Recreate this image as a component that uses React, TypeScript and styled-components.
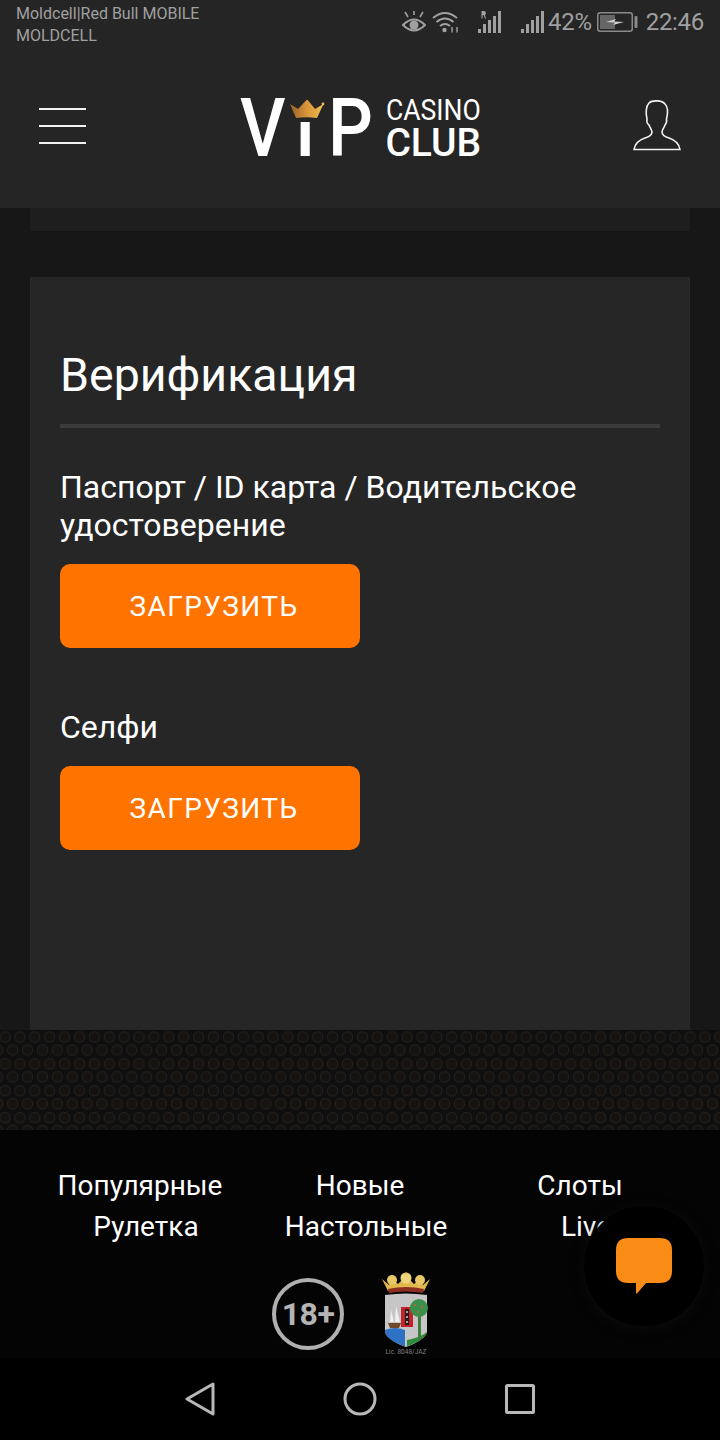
import React, { FC } from "react";
import styled, { createGlobalStyle } from "styled-components";

const GlobalStyle = createGlobalStyle`
  html, body {
    margin: 0;
    padding: 0;
    background: #000;
  }
  * {
    box-sizing: border-box;
  }
`;

const Screen = styled.div`
  position: relative;
  display: flex;
  flex-direction: column;
  width: 720px;
  height: 1440px;
  overflow: hidden;
  background: #171717;
  font-family: Roboto, "Noto Sans", sans-serif;
  color: #fff;
`;

const Header = styled.header`
  display: flex;
  flex-direction: column;
  flex: 0 0 208px;
  background: #252525;
`;

const StatusBar = styled.div`
  display: flex;
  justify-content: space-between;
  height: 46px;
  padding: 3px 16px 0;
  color: #a0a0a0;
`;

const Carrier = styled.div`
  font-size: 16px;
  line-height: 22px;
`;

const StatusRight = styled.div`
  display: flex;
  align-items: center;
  height: 44px;
  margin-top: -3px;
`;

const StatusIcon = styled.svg<{ $gap?: number }>`
  display: block;
  margin-right: ${(p) => p.$gap ?? 0}px;
`;

const StatusText = styled.span<{ $gap?: number }>`
  font-size: 24px;
  line-height: 44px;
  margin-right: ${(p) => p.$gap ?? 0}px;
  letter-spacing: -0.3px;
`;

const AppBar = styled.div`
  display: flex;
  align-items: flex-start;
  justify-content: space-between;
  padding: 53px 39px 0;
`;

const Burger = styled.div`
  display: flex;
  flex-direction: column;
  gap: 15px;
  width: 47px;
  margin-top: 9px;
`;

const BurgerLine = styled.span`
  display: block;
  height: 2px;
  background: #f2f2f2;
`;

const Logo = styled.div`
  display: flex;
  flex: none;
  align-items: flex-start;
  height: 58px;
  width: 241px;
  margin-left: 1px;
`;

const LogoBig = styled.span<{ $width: number }>`
  display: block;
  flex: none;
  width: ${(p) => p.$width}px;
  font-size: 81px;
  line-height: 60px;
  font-weight: 500;
  transform: scaleX(0.87);
  transform-origin: left center;
`;

const LogoCrowned = styled.span`
  position: relative;
  display: block;
  flex: none;
  width: 39px;
  height: 58px;
`;

const LogoI = styled.span`
  position: absolute;
  left: 8px;
  bottom: -10px;
  font-size: 64px;
  line-height: 1;
  font-weight: 700;
`;

const Crown = styled.svg`
  position: absolute;
  left: 0;
  top: 0;
`;

const LogoWords = styled.div`
  display: flex;
  flex: none;
  flex-direction: column;
  margin-left: -2px;
`;

const LogoCasino = styled.span`
  font-size: 29.5px;
  line-height: 22px;
  height: 30px;
  white-space: nowrap;
  transform: scaleX(0.9);
  transform-origin: left center;
`;

const LogoClub = styled.span`
  font-size: 39px;
  line-height: 28px;
  font-weight: 500;
  letter-spacing: -0.1px;
  white-space: nowrap;
`;

const Main = styled.main`
  display: flex;
  flex-direction: column;
  flex: 1 1 auto;
  padding: 0 30px;
  background: #171717;
`;

const CardTail = styled.div`
  flex: 0 0 23px;
  background: #1e1e1e;
`;

const Card = styled.section`
  flex: 1 1 auto;
  margin-top: 46px;
  padding: 70px 30px 0;
  background: #262626;
`;

const Title = styled.h1`
  margin: 0;
  padding-bottom: 21px;
  border-bottom: 4px solid #3b3b3b;
  font-size: 46.5px;
  line-height: 56px;
  font-weight: 400;
`;

const DocBlock = styled.div<{ $top: number }>`
  margin-top: ${(p) => p.$top}px;
`;

const DocLabel = styled.div`
  font-size: 32px;
  line-height: 38px;
`;

const UploadButton = styled.button`
  display: block;
  width: 300px;
  height: 84px;
  margin-top: 20px;
  padding: 0 0 0 8px;
  border: 0;
  border-radius: 10px;
  background: #ff7300;
  color: #fff;
  font-family: inherit;
  font-size: 28px;
  letter-spacing: 1.4px;
`;

const Perforated = styled.div`
  flex: 0 0 100px;
  background-color: #0f0f0f;
  background-image:
    radial-gradient(circle at 50% 50%, #15120f 0, #15120f 4.4px, #242322 5.1px, #1c1c1c 5.5px, transparent 6px),
    radial-gradient(circle at 50% 50%, #15120f 0, #15120f 4.4px, #242322 5.1px, #1c1c1c 5.5px, transparent 6px);
  background-size: 14.9px 26.9px;
  background-position: -2.45px -6.45px, 5.25px 6.55px;
`;

const Footer = styled.footer`
  display: flex;
  flex-direction: column;
  flex: 0 0 228px;
  padding: 35px 30px 0;
  background: #040404;
`;

const LinkRow = styled.nav<{ $shift?: number }>`
  display: grid;
  grid-template-columns: repeat(3, 220px);
  height: 41px;
  padding-left: ${(p) => p.$shift ?? 0}px;
`;

const FooterLink = styled.a`
  font-size: 28px;
  line-height: 41px;
  text-align: center;
  color: #fff;
  white-space: nowrap;
`;

const Badges = styled.div`
  display: flex;
  justify-content: center;
  align-items: flex-start;
  gap: 37px;
  margin-top: 25px;
  padding-right: 17px;
`;

const AgeBadge = styled.div`
  display: flex;
  align-items: center;
  justify-content: center;
  width: 72px;
  height: 72px;
  margin-top: 6px;
  border: 4px solid #b0b0b0;
  border-radius: 50%;
  color: #b4b4b4;
  font-size: 32px;
  font-weight: 700;
  letter-spacing: -0.5px;
`;

const Licence = styled.div`
  display: flex;
  flex-direction: column;
  align-items: center;
  width: 50px;
`;

const LicenceText = styled.span`
  font-size: 6.5px;
  line-height: 10px;
  color: #808080;
  white-space: nowrap;
`;

const ChatButton = styled.div`
  position: absolute;
  left: 584px;
  top: 1206px;
  display: flex;
  align-items: center;
  justify-content: center;
  width: 120px;
  height: 120px;
  border-radius: 50%;
  background: #000;
  box-shadow: 0 2px 14px rgba(20, 20, 20, 0.5);
`;

const NavBar = styled.div`
  display: grid;
  grid-template-columns: repeat(3, 160px);
  justify-content: center;
  align-items: center;
  flex: 0 0 82px;
  background: #000;
`;

const NavItem = styled.div`
  display: flex;
  justify-content: center;
`;

const links = [
  ["Популярные", "Новые", "Слоты"],
  ["Рулетка", "Настольные", "Live"],
];

const CrownMark: FC = () => (
  <Crown width="36" height="20" viewBox="0 0 36 20">
    <defs>
      <linearGradient id="crownGold" x1="0" y1="0" x2="1" y2="0">
        <stop offset="0" stopColor="#9a5f28" />
        <stop offset="0.5" stopColor="#d8953a" />
        <stop offset="1" stopColor="#f0bd4e" />
      </linearGradient>
    </defs>
    <path
      d="M1 5 L9 10 L16.5 2 L18 0.5 L19.5 2 L26 10 L34.5 5 L28 19 Q18 17.5 7 19 Z"
      fill="url(#crownGold)"
    />
    <circle cx="34" cy="5" r="1.4" fill="#f0c050" />
  </Crown>
);

const Crest: FC = () => (
  <svg width="50" height="75" viewBox="0 0 50 75" style={{ display: "block" }}>
    <path d="M1 7 L8 13 L11 7 L17 12 L25 4 L33 12 L39 7 L42 13 L49 7 L43 19 Q25 15 7 19 Z" fill="#e0b84e" />
    <circle cx="11" cy="8" r="5" fill="#e8c866" />
    <circle cx="25" cy="6" r="5.5" fill="#efd67c" />
    <circle cx="39" cy="8" r="5" fill="#e8c866" />
    <circle cx="25" cy="2" r="1.6" fill="#e8c866" />
    <path d="M7 17 Q25 13 43 17 L42 21 Q25 18 8 21 Z" fill="#8c2f22" />
    <path d="M4 23 Q25 20 46 23 V60 Q44 68 25 75 Q6 68 4 60 Z" fill="#c6c6c6" />
    <path d="M4 58 Q14 54 24 58 V74.6 Q6 68 4 60 Z" fill="#2f72c4" />
    <path d="M26 68 Q38 66 46 60 Q44 68 26 74.3 Z" fill="#2f8c3c" />
    <rect x="20" y="35" width="12" height="20" fill="#c4212a" />
    <rect x="24" y="37" width="4" height="16" fill="#1e1e1e" />
    <path d="M25 39 l2 2 m0 -2 l-2 2 M25 44 l2 2 m0 -2 l-2 2 M25 49 l2 2 m0 -2 l-2 2" stroke="#ddd" strokeWidth="0.7" />
    <rect x="37" y="42" width="3" height="26" fill="#3f7d3c" />
    <circle cx="38" cy="36" r="9" fill="#3c8f4a" />
    <circle cx="34" cy="33" r="1" fill="#d0603a" />
    <circle cx="41" cy="35" r="1" fill="#d0603a" />
    <circle cx="37" cy="40" r="1" fill="#d0603a" />
    <path d="M7 51 H20 L18 56 H9 Z" fill="#6e4a2a" />
    <path d="M9 50 L10 38 L13 50 Z M14 50 L15 34 L19 50 Z" fill="#efefef" />
  </svg>
);

const SignalBars: FC = () => (
  <>
    <rect x="0" y="18" width="3" height="4" />
    <rect x="5" y="13" width="3" height="9" />
    <rect x="10" y="9" width="3" height="13" />
    <rect x="15" y="5" width="3" height="17" />
    <rect x="20" y="0" width="3" height="22" />
  </>
);

const App: FC = () => (
  <Screen>
    <GlobalStyle />
    <Header>
      <StatusBar>
        <Carrier>
          Moldcell|Red Bull MOBILE
          <br />
          MOLDCELL
        </Carrier>
        <StatusRight>
          <StatusIcon $gap={6} width="24" height="22" viewBox="0 0 24 22" fill="none" stroke="#a0a0a0">
            <path d="M1 14 Q12 3 23 14 Q12 25 1 14 Z" strokeWidth="2" />
            <circle cx="12" cy="14" r="4.5" fill="#a0a0a0" stroke="none" />
            <path d="M3 1 L6 6 M12 0 V4 M21 1 L18 6" strokeWidth="1.6" />
          </StatusIcon>
          <StatusIcon $gap={19} width="27" height="22" viewBox="0 0 27 22" fill="none" stroke="#a0a0a0" strokeWidth="2">
            <path d="M1 7 Q13 -3 25 7" />
            <path d="M4.5 11 Q13 4 21.5 11" />
            <path d="M8 15 Q13 11 18 15" />
            <circle cx="12.5" cy="19" r="2.2" fill="#a0a0a0" stroke="none" />
            <path d="M20 21.5 V16 M25 21.5 V16" strokeWidth="1.4" />
          </StatusIcon>
          <StatusIcon $gap={20} width="23" height="22" viewBox="0 0 23 22" fill="#a0a0a0">
            <SignalBars />
            <path d="M3.5 0 h2.6 q1.8 0 1.8 2 q0 1.5 -1 2 l1.2 3.5 h-1.2 l-1 -3.2 h-1.3 v3.2 h-1.1 Z" />
          </StatusIcon>
          <StatusIcon $gap={4} width="23" height="22" viewBox="0 0 23 22" fill="#a0a0a0">
            <SignalBars />
          </StatusIcon>
          <StatusText $gap={5}>42%</StatusText>
          <StatusIcon $gap={8} width="41" height="20" viewBox="0 0 41 20" fill="none">
            <rect x="0.75" y="0.75" width="34.5" height="18.5" rx="2.5" stroke="#8a8a8a" strokeWidth="1.5" />
            <rect x="3" y="3" width="15" height="14" fill="#666" />
            <rect x="37.5" y="4" width="3" height="12" rx="1" fill="#8a8a8a" />
            <path d="M9 10 L19 7 L17 9.5 L27 10 L16 13 L18 10.5 Z" fill="#d0d0d0" />
          </StatusIcon>
          <StatusText>22:46</StatusText>
        </StatusRight>
      </StatusBar>
      <AppBar>
        <Burger>
          <BurgerLine />
          <BurgerLine />
          <BurgerLine />
        </Burger>
        <Logo>
          <LogoBig $width={49}>V</LogoBig>
          <LogoCrowned>
            <CrownMark />
            <LogoI>ı</LogoI>
          </LogoCrowned>
          <LogoBig $width={60}>P</LogoBig>
          <LogoWords>
            <LogoCasino>CASINO</LogoCasino>
            <LogoClub>CLUB</LogoClub>
          </LogoWords>
        </Logo>
        <svg width="48" height="52" viewBox="0 0 48 52" fill="none" stroke="#f2f2f2" strokeWidth="1.6">
          <path d="M1 50.5 H47 C46 44 42 41 36 39 C31 37.5 29 36 29 33 C29 31 31 29 32 26 C33 25 34 23 33.5 20 C35 14 35 8 32 5 C29 1 19 1 16 4 C13 7 12.5 14 14 20 C13.5 23 14.5 25 16 26 C17 29 19 31 19 33 C19 36 17 37.5 12 39 C6 41 2 44 1 50.5 Z" />
        </svg>
      </AppBar>
    </Header>

    <Main>
      <CardTail />
      <Card>
        <Title>Верификация</Title>
        <DocBlock $top={40}>
          <DocLabel>Паспорт / ID карта / Водительское удостоверение</DocLabel>
          <UploadButton>ЗАГРУЗИТЬ</UploadButton>
        </DocBlock>
        <DocBlock $top={60}>
          <DocLabel>Селфи</DocLabel>
          <UploadButton>ЗАГРУЗИТЬ</UploadButton>
        </DocBlock>
      </Card>
    </Main>

    <Perforated />

    <Footer>
      {links.map((row, index) => (
        <LinkRow key={index} $shift={index === 1 ? 6 : 0}>
          {row.map((label) => (
            <FooterLink key={label}>{label}</FooterLink>
          ))}
        </LinkRow>
      ))}
      <Badges>
        <AgeBadge>18+</AgeBadge>
        <Licence>
          <Crest />
          <LicenceText>Lic. 8048/JAZ</LicenceText>
        </Licence>
      </Badges>
    </Footer>

    <ChatButton>
      <svg width="56" height="56" viewBox="0 0 56 56">
        <path
          d="M12 0 H44 C52 0 56 4 56 12 V33 C56 41 52 45 44 45 H30 L21 55.5 Q20 56 20 54 V45 H12 C4 45 0 41 0 33 V12 C0 4 4 0 12 0 Z"
          fill="#fa8c16"
        />
      </svg>
    </ChatButton>

    <NavBar>
      <NavItem>
        <svg width="30" height="34" viewBox="0 0 30 34" fill="none" stroke="#b8b8b8" strokeWidth="3" strokeLinejoin="round">
          <path d="M2 17 L28 2 V32 Z" />
        </svg>
      </NavItem>
      <NavItem>
        <svg width="34" height="34" viewBox="0 0 34 34" fill="none" stroke="#b8b8b8" strokeWidth="3">
          <circle cx="17" cy="17" r="15" />
        </svg>
      </NavItem>
      <NavItem>
        <svg width="30" height="30" viewBox="0 0 30 30" fill="none" stroke="#b8b8b8" strokeWidth="3" strokeLinejoin="round">
          <rect x="1.5" y="1.5" width="27" height="27" rx="1" />
        </svg>
      </NavItem>
    </NavBar>
  </Screen>
);

export default App;
